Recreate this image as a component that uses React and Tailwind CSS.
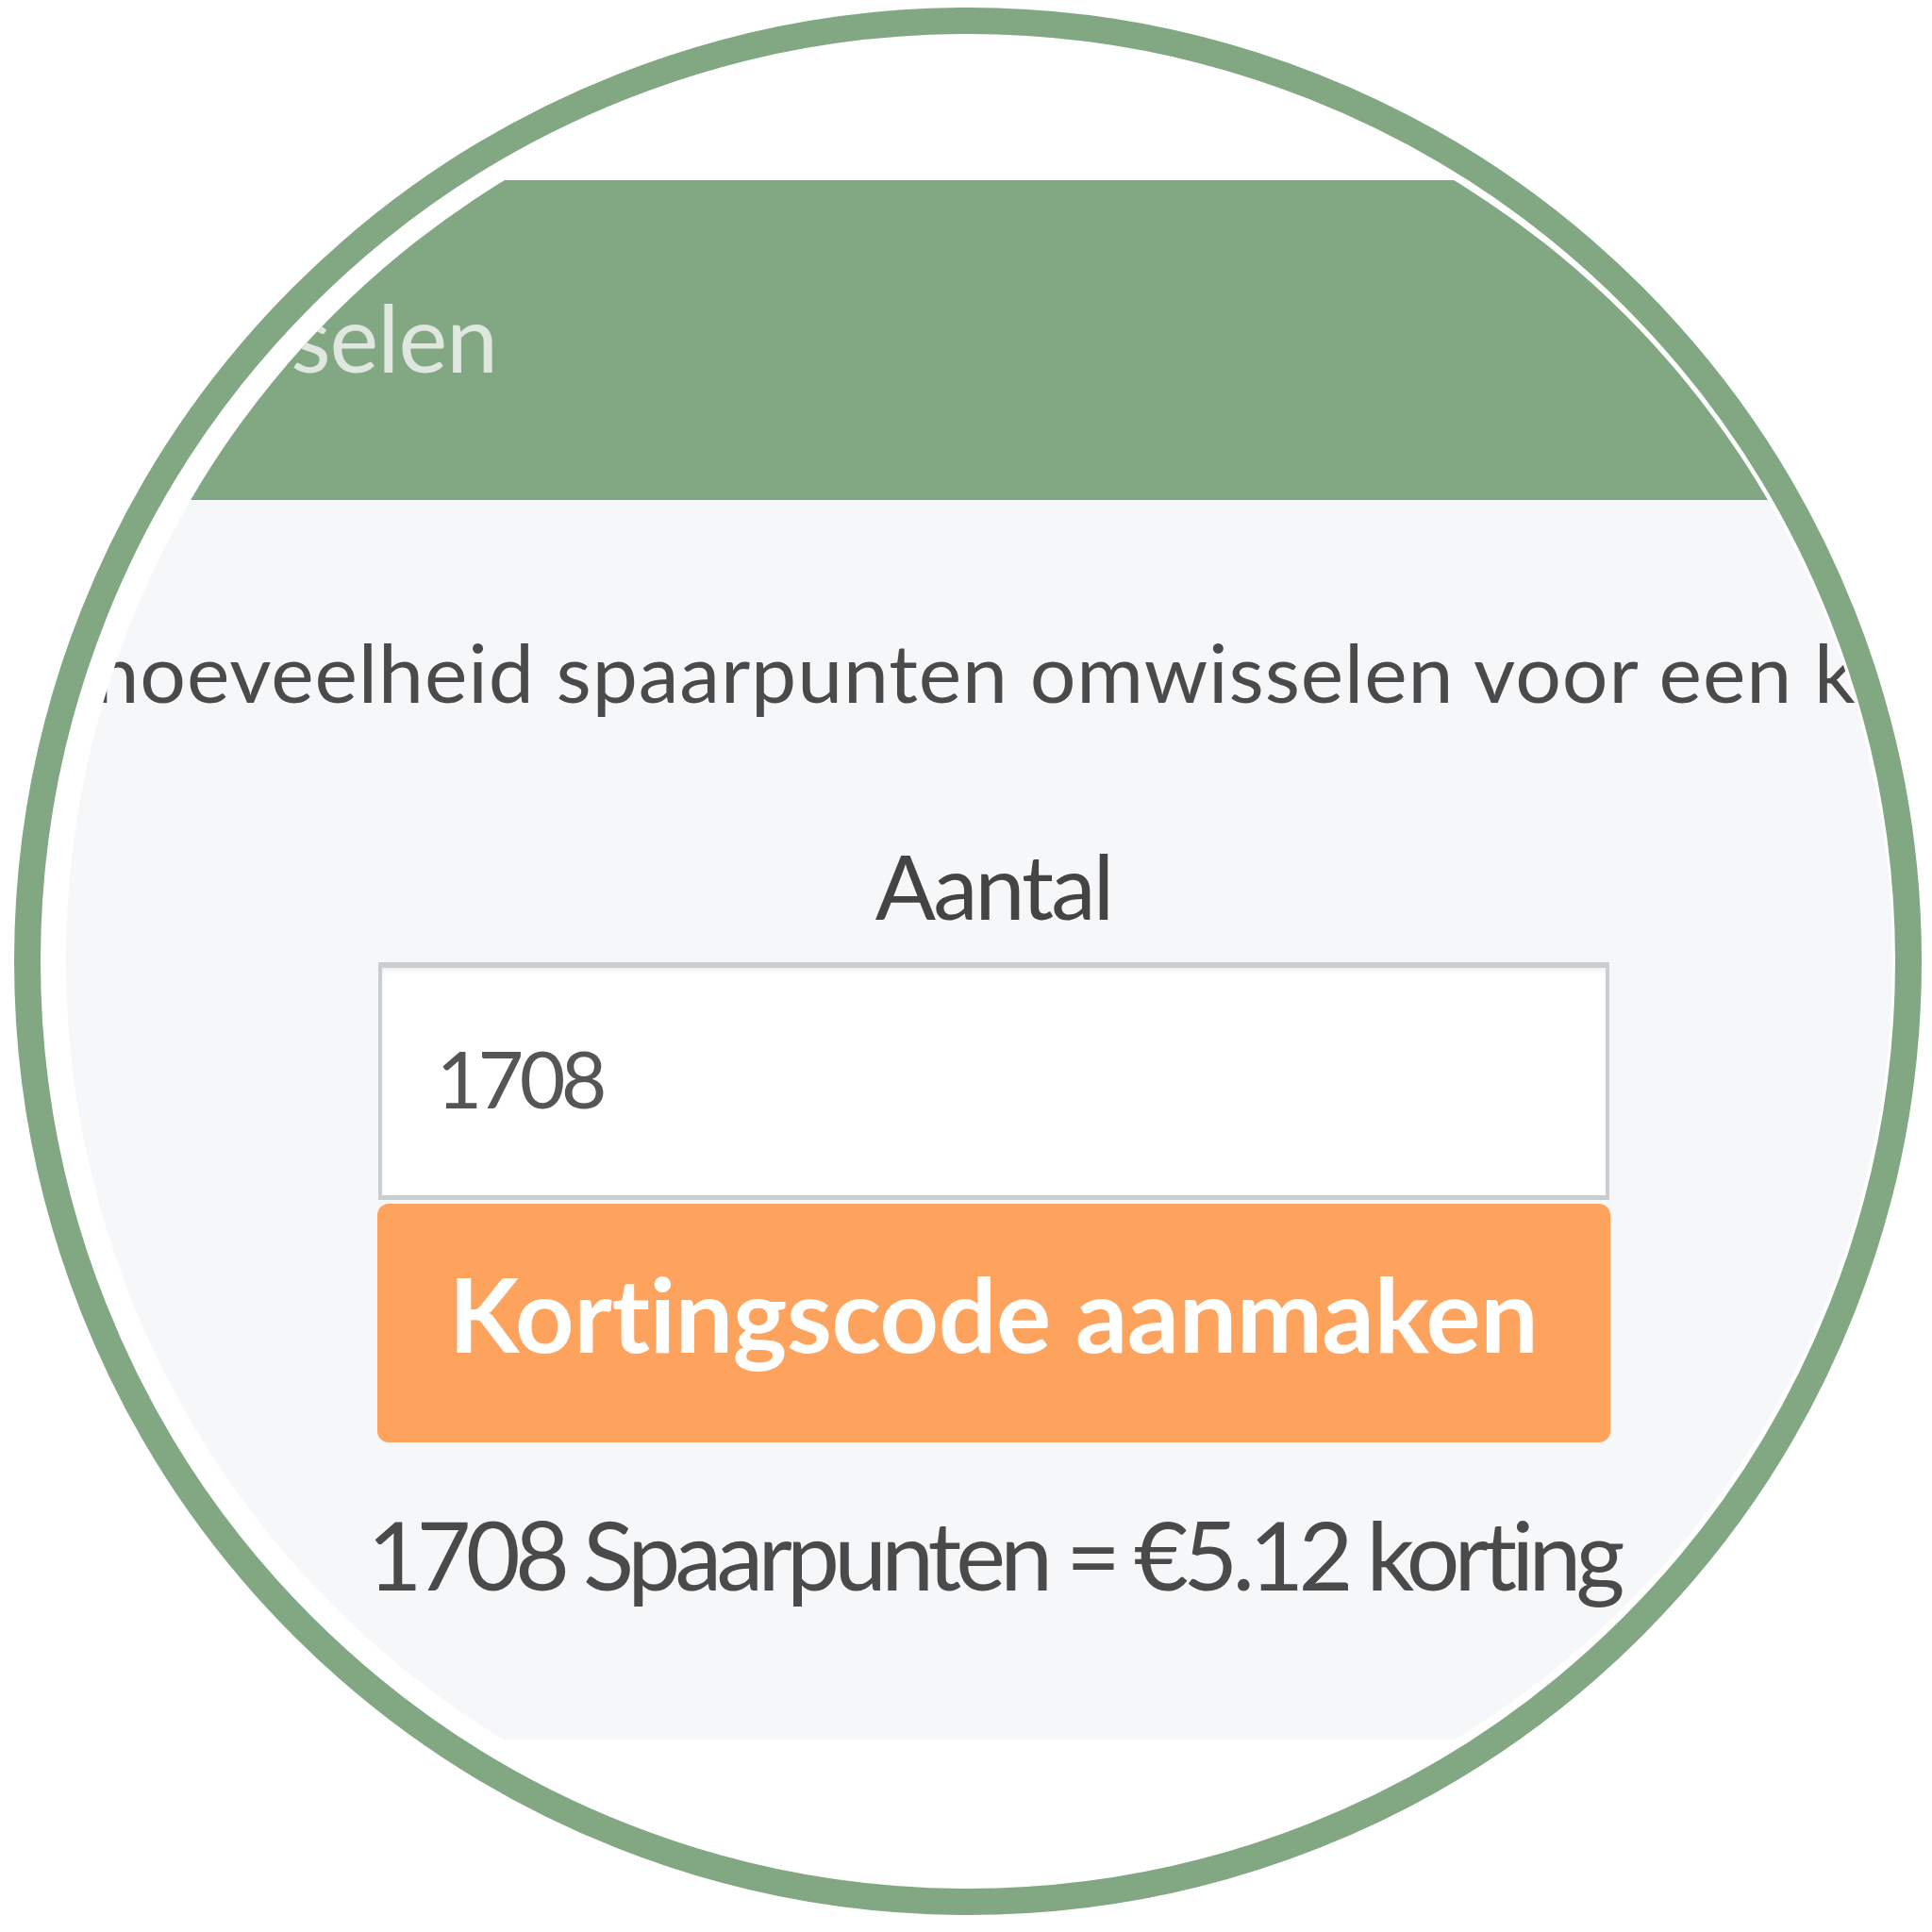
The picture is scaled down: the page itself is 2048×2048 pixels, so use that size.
export default function App() {
  return (
    <div className="relative w-[2048px] h-[2048px] bg-white overflow-hidden font-['Lato',sans-serif]">
      <div className="absolute left-[70px] top-[50px] w-[1936px] h-[1936px] rounded-full overflow-hidden">
        <div className="mt-[141px] w-full">
          <div className="h-[339px] bg-[#81a883] pt-[117px]">
            <div className="w-[457px] flex justify-end">
              <span className="whitespace-nowrap text-[98px] leading-none font-normal tracking-[-0.01em] text-[#dfe7df]">
                Spaarpunten omwisselen
              </span>
            </div>
          </div>
          <div className="h-[1314px] bg-[#f6f7f9] flex flex-col items-center pl-[30px] pt-[130px] text-[#4a4a4a]">
            <p className="mr-[32px] whitespace-nowrap text-[86px] leading-[1.2] font-normal tracking-[0.01em]">
              Je kunt een hoeveelheid spaarpunten omwisselen voor een kortingscode.
            </p>
            <label className="mt-[118px] text-[95px] leading-[1.2] font-normal tracking-[-0.03em] text-[#444444]">
              Aantal
            </label>
            <input
              readOnly
              value="1708"
              className="mt-[25px] w-[1305px] h-[252px] bg-white border-[4px] border-t-[6px] border-b-[5px] border-[#c8ced2] shadow-[inset_0_4px_4px_rgba(0,0,0,0.05)] pl-[58px] pb-[8px] text-[84px] font-normal tracking-[-0.055em] text-[#555555] outline-none"
            />
            <button className="mt-[4px] w-[1307px] h-[253px] rounded-[12px] bg-[#fea35e] flex items-center justify-center pb-[20px] text-white text-[109px] leading-[1.2] font-bold tracking-[-0.004em]">
              Kortingscode aanmaken
            </button>
            <p className="mt-[58px] whitespace-nowrap text-[100px] leading-[1.2] font-normal tracking-[-0.058em] text-[#4a4a4a]">
              1708 Spaarpunten = €5.12 korting
            </p>
          </div>
        </div>
      </div>
      <div className="absolute left-[15px] top-[8px] w-[2022px] h-[2022px] rounded-full border-[28px] border-[#81a883]" />
    </div>
  );
}
